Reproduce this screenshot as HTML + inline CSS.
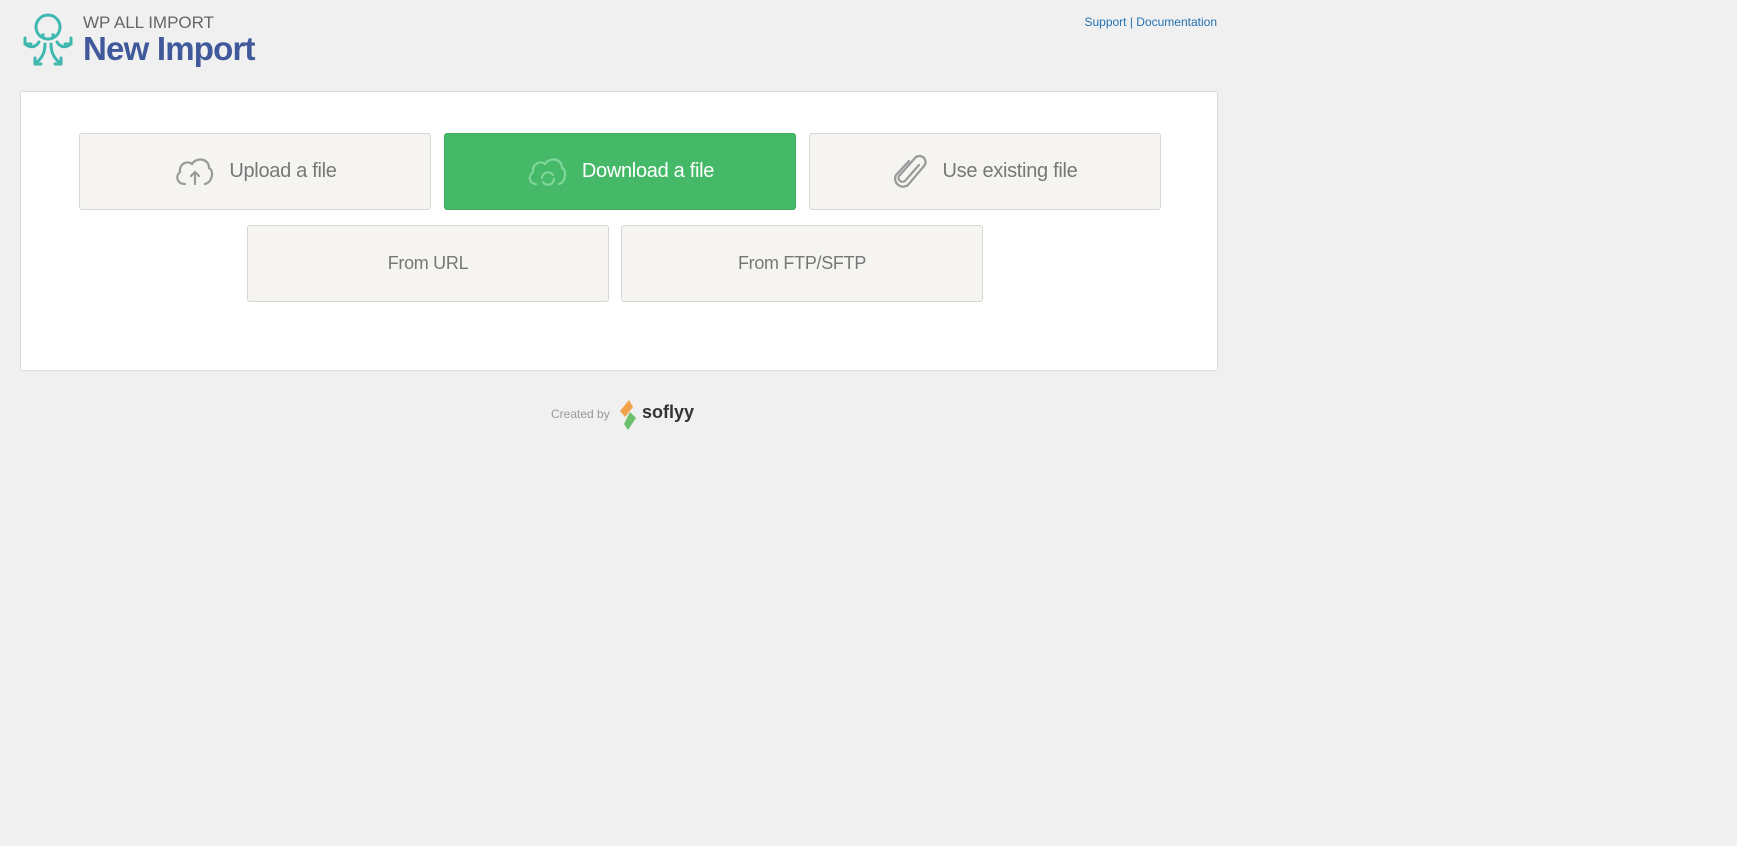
<!DOCTYPE html>
<html><head><meta charset="utf-8"><style>
body{margin:0;background:#f0f0f1;font-family:"Liberation Sans",sans-serif;width:1737px;height:846px;position:relative;overflow:hidden}
.abs{position:absolute}
.panel{left:20px;top:91px;width:1198px;height:280px;background:#fff;border:1px solid #dcdcde;border-radius:3px;box-sizing:border-box}
.btn{position:absolute;box-sizing:border-box;background:#f5f4f1;border:1px solid #d6d6d3;border-radius:3px;color:#777;font-size:20px;display:flex;align-items:center;justify-content:center;gap:14px;letter-spacing:-.3px}
.g{background:#46b969;border-color:#3fab5f;color:#fff}
</style></head><body>
<svg class="abs" style="left:20px;top:12px" width="56" height="58" viewBox="0 0 56 58" fill="none" stroke="#3fb8b0" stroke-width="3" stroke-linecap="round" stroke-linejoin="round">
<circle cx="28" cy="15" r="12"/>
<circle cx="23" cy="23" r="1.7" fill="#3fb8b0" stroke="none"/><circle cx="33" cy="23" r="1.7" fill="#3fb8b0" stroke="none"/>
<path d="M19 30 C15 36 10 36 5 32 M5 32 l0 -6 M5 32 l6 0"/>
<path d="M37 30 C41 36 46 36 51 32 M51 32 l0 -6 M51 32 l-6 0"/>
<path d="M25 32 C25 42 21 47 15 52 M15 52 l0 -6 M15 52 l6 0"/>
<path d="M31 32 C31 42 35 47 41 52 M41 52 l0 -6 M41 52 l-6 0"/>
</svg>
<div class="abs" style="left:83px;top:13px;font-size:17px;color:#666">WP ALL IMPORT</div>
<div class="abs" style="left:83px;top:30px;font-size:33px;font-weight:bold;color:#40599b;letter-spacing:-.8px">New Import</div>
<div class="abs" style="right:520px;top:15px;font-size:12px;color:#2271b1">Support | Documentation</div>
<div class="abs panel"></div>
<div class="btn" style="left:79px;top:133px;width:352px;height:77px">
<svg width="42" height="36" viewBox="0 0 42 36" fill="none" stroke="#999" stroke-width="2.2" stroke-linecap="round"><path d="M12 30 C4 30 2 22 7 18 C6 10 14 6 19 10 C23 3 36 4 36 14 C41 16 40 28 32 30"/><path d="M22 30 V18 M18 22 l4 -4 4 4"/></svg>
<span>Upload a file</span></div>
<div class="btn g" style="left:444px;top:133px;width:352px;height:77px">
<svg width="42" height="36" viewBox="0 0 42 36" fill="none" stroke="#7fd69a" stroke-width="2.2" stroke-linecap="round"><path d="M10 30 C3 30 2 22 7 18 C6 10 14 6 19 10 C23 3 36 4 36 14 C41 16 40 28 33 30"/><path d="M16 24 a6 6 0 0 1 11 -3 M28 25 a6 6 0 0 1 -11 3"/></svg>
<span>Download a file</span></div>
<div class="btn" style="left:809px;top:133px;width:352px;height:77px">
<svg width="36" height="38" viewBox="0 0 36 38" fill="none" stroke="#999" stroke-width="2.2" stroke-linecap="round"><path d="M26 12 L12 28 a4 4 0 0 1 -6 -5 L22 5 a6 6 0 0 1 9 8 L15 32 a8 8 0 0 1 -12 -10 L16 8"/></svg>
<span>Use existing file</span></div>
<div class="btn" style="left:247px;top:225px;width:362px;height:77px;font-size:18px">From URL</div>
<div class="btn" style="left:621px;top:225px;width:362px;height:77px;font-size:18px">From FTP/SFTP</div>
<div class="abs" style="left:551px;top:407px;font-size:12px;color:#999">Created by</div>
<svg class="abs" style="left:618px;top:400px" width="20" height="30" viewBox="0 0 20 30"><path d="M11 0 L2 11 L7 17 L15 7 Z" fill="#f0a34a"/><path d="M12 12 L18 18 L10 30 L6 24 Z" fill="#6cc06a"/></svg>
<div class="abs" style="left:642px;top:402px;font-size:18px;font-weight:bold;color:#333">soflyy</div>
</body></html>
